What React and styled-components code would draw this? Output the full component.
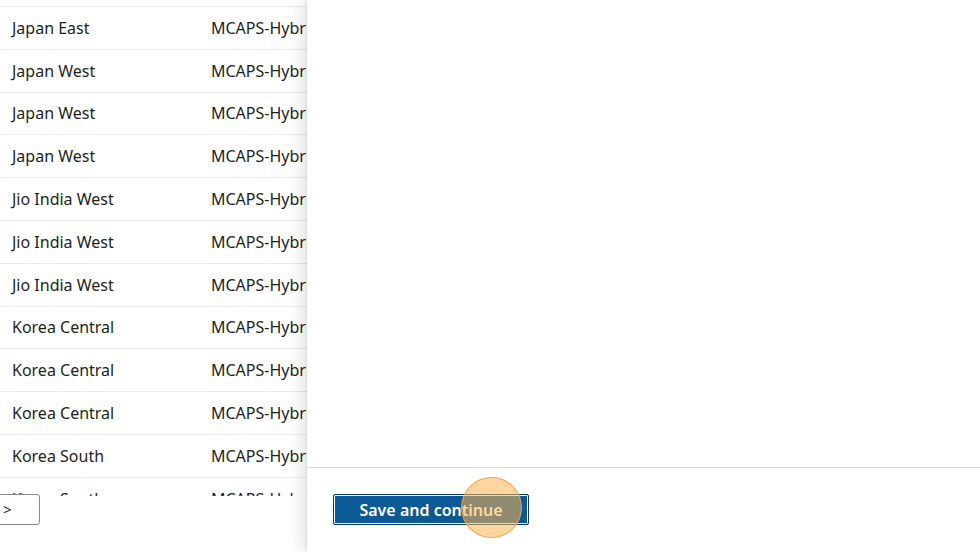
import styled, { createGlobalStyle } from "styled-components";

const rows = [
  "Japan East",
  "Japan West",
  "Japan West",
  "Japan West",
  "Jio India West",
  "Jio India West",
  "Jio India West",
  "Korea Central",
  "Korea Central",
  "Korea Central",
  "Korea South",
  "Korea South",
];

export default function App() {
  return (
    <>
      <GlobalStyle />
      <Page>
        <ListSide>
          <TableViewport>
            <Table>
              {rows.map((region, i) => (
                <Row key={i}>
                  <RegionCell>{region}</RegionCell>
                  <GroupCell>MCAPS-Hybrid-RG</GroupCell>
                </Row>
              ))}
            </Table>
          </TableViewport>
          <Pager>
            <PagerButton>&gt;</PagerButton>
          </Pager>
        </ListSide>

        <Panel>
          <PanelBody />
          <Footer>
            <PrimaryButton>
              Save and continue
              <Highlight />
            </PrimaryButton>
          </Footer>
        </Panel>
      </Page>
    </>
  );
}

const GlobalStyle = createGlobalStyle`
  html, body {
    margin: 0;
    padding: 0;
    background: #ffffff;
    font-family: "Noto Sans", "Open Sans", sans-serif;
    color: #201f1e;
  }
`;

const Page = styled.div`
  width: 980px;
  height: 552px;
  display: flex;
  overflow: hidden;
  position: relative;
`;

const ListSide = styled.div`
  width: 307px;
  flex-shrink: 0;
  display: flex;
  flex-direction: column;
  position: relative;
`;

const TableViewport = styled.div`
  height: 496px;
  overflow: hidden;
`;

const Table = styled.div`
  margin-top: 6px;
  border-top: 1px solid #edebe9;
`;

const Row = styled.div`
  height: 41.8px;
  display: flex;
  align-items: center;
  border-bottom: 1px solid #edebe9;
  font-size: 16px;
  white-space: nowrap;
`;

const RegionCell = styled.div`
  width: 199px;
  padding-left: 12px;
  flex-shrink: 0;
`;

const GroupCell = styled.div`
  overflow: hidden;
`;

const Pager = styled.div`
  margin-top: -2px;
  margin-left: -20px;
  position: relative;
  background: #ffffff;
  width: 60px;
`;

const PagerButton = styled.div`
  width: 56px;
  height: 29px;
  border: 1px solid #8a8886;
  border-radius: 3px;
  box-sizing: content-box;
  font-size: 15px;
  line-height: 29px;
  padding-left: 2px;
  text-indent: 20px;
  color: #201f1e;
  background: #ffffff;
`;

const Panel = styled.div`
  flex: 1;
  display: flex;
  flex-direction: column;
  background: #ffffff;
  box-shadow: -6px 0 14px rgba(0, 0, 0, 0.1), -1px 0 3px rgba(0, 0, 0, 0.06);
  position: relative;
  z-index: 1;
`;

const PanelBody = styled.div`
  height: 467px;
  border-bottom: 1px solid #dddcda;
`;

const Footer = styled.div`
  padding: 26px 0 0 26px;
`;

const PrimaryButton = styled.div`
  position: relative;
  width: 196px;
  height: 31px;
  box-sizing: border-box;
  background: #0b5a96;
  border: 1px solid #003a66;
  box-shadow: inset 0 0 0 1px #ffffff;
  border-radius: 2px;
  color: #ffffff;
  font-size: 16px;
  font-weight: 600;
  display: flex;
  align-items: center;
  justify-content: center;
`;

const Highlight = styled.div`
  position: absolute;
  left: 127px;
  top: -18px;
  width: 61px;
  height: 61px;
  border-radius: 50%;
  background: rgba(255, 180, 80, 0.55);
  border: 1.5px solid rgba(240, 160, 70, 0.9);
  box-sizing: border-box;
`;
